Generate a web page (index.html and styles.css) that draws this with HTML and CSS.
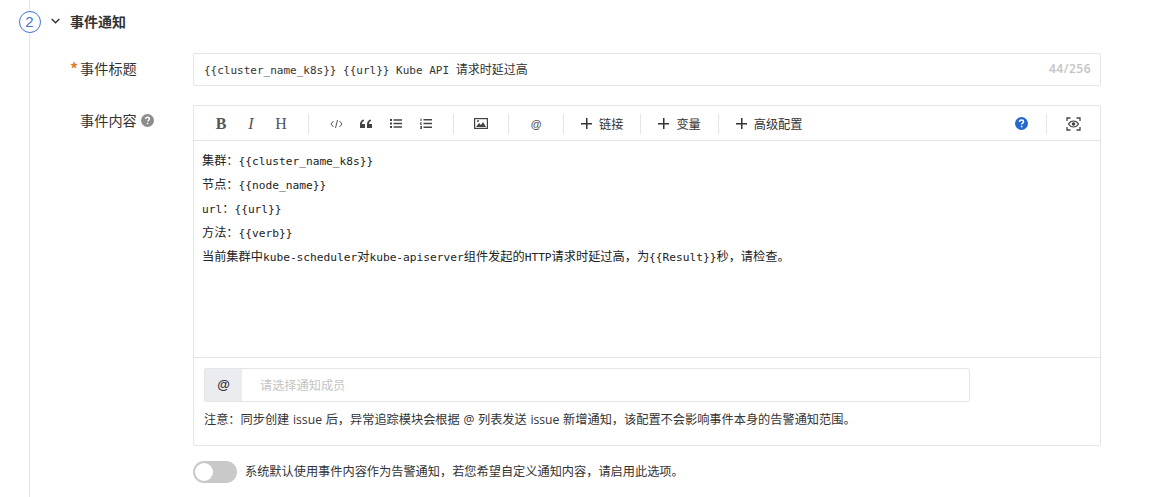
FILE: index.html
```html
<!DOCTYPE html>
<html lang="zh-CN">
<head>
    <meta charset="UTF-8">
    <meta name="viewport" content="width=device-width, initial-scale=1.0">
    <title>事件通知</title>
    <link rel="stylesheet" href="styles.css">
</head>
<body>
    <div class="step">
        <div class="rail">
            <div class="rail-stub"></div>
            <div class="step-num">2</div>
            <div class="rail-line"></div>
        </div>
        <div class="step-main">
            <div class="step-head">
                <svg class="chevron" width="9" height="6" viewBox="0 0 9 6"><path d="M.7 1l3.800 3.800L8.300 1" fill="none" stroke="#333" stroke-width="1.4"/></svg>
                <span class="step-title">事件通知</span>
            </div>

            <div class="form-row title-row">
                <div class="form-label"><span class="required">*</span>事件标题</div>
                <div class="title-input">
                    <span class="title-value"><span class="title-code">{{cluster_name_k8s}} {{url}} Kube API </span>请求时延过高</span>
                    <span class="counter">44/256</span>
                </div>
            </div>

            <div class="form-row">
                <div class="form-label label-top">事件内容<svg class="help" width="13" height="13" viewBox="0 0 13 13"><circle cx="6.5" cy="6.5" r="6.5" fill="#8c8c8c"/><path d="M4.6 5.1c0-1.100.8-1.800 1.900-1.800s1.900.7 1.900 1.600c0 1.300-1.700 1.400-1.700 2.700" fill="none" stroke="#fff" stroke-width="1.4"/><rect x="5.900" y="8.800" width="1.400" height="1.400" fill="#fff"/></svg></div>
                <div class="editor">
                    <div class="toolbar">
                        <span class="tool tool-b">B</span>
                        <span class="tool tool-i">I</span>
                        <span class="tool tool-h">H</span>
                        <span class="sep sep-a"></span>
                        <span class="tool tool-svg">
                            <svg width="13" height="10" viewBox="0 0 13 10"><path d="M3.500 2L1 5l2.500 3M9.500 2L12 5 9.500 8M7.500 1L5.500 9" fill="none" stroke="#555" stroke-width="1"/></svg>
                        </span>
                        <span class="tool tool-svg">
                            <svg width="12" height="9" viewBox="0 0 12 9"><path d="M0 5h2c0-1.500.6-2.600 2-3V.4C1.500.8 0 2.500 0 5zM0 5v4h5V5zM7 5h2c0-1.500.6-2.600 2-3V.4C8.500.8 7 2.500 7 5zM7 5v4h5V5z" fill="#444"/></svg>
                        </span>
                        <span class="tool tool-svg">
                            <svg width="12" height="9" viewBox="0 0 12 9"><path d="M0 0h2v2H0zM0 3.500h2v2H0zM0 7h2v2H0zM3.500.3H12v1.400H3.500zM3.500 3.800H12v1.400H3.500zM3.500 7.300H12v1.400H3.500z" fill="#444"/></svg>
                        </span>
                        <span class="tool tool-svg">
                            <svg width="12" height="11" viewBox="0 0 12 11"><path d="M.5.500h1v2.500h-1zM0 4.500h2v.8H.8v.7H2v.8H0zM0 8h2v3H0v-.7h1.200v-.4H.4v-.6h.8v-.6H0zM3.500 1H12v1.400H3.500zM3.500 4.800H12v1.400H3.500zM3.500 8.600H12V10H3.500z" fill="#444"/></svg>
                        </span>
                        <span class="sep sep-b"></span>
                        <span class="tool tool-svg">
                            <svg width="14" height="11" viewBox="0 0 14 11"><rect x=".6" y=".6" width="12.800" height="9.800" fill="none" stroke="#444" stroke-width="1.200"/><path d="M2 9l3-4 2 2 2-3 3 5z" fill="#444"/><circle cx="4" cy="3" r="1" fill="#444"/></svg>
                        </span>
                        <span class="sep sep-c"></span>
                        <span class="tool tool-at">@</span>
                        <span class="sep sep-d"></span>
                        <span class="tool-text"><span class="plus"></span>链接</span>
                        <span class="sep sep-e"></span>
                        <span class="tool-text"><span class="plus"></span>变量</span>
                        <span class="sep sep-e"></span>
                        <span class="tool-text"><span class="plus"></span>高级配置</span>
                        <span class="toolbar-right">
                            <svg width="13" height="13" viewBox="0 0 13 13"><circle cx="6.500" cy="6.500" r="6.500" fill="#2468cc"/><path d="M4.500 5c0-1.200.9-1.900 2-1.900s2 .7 2 1.700c0 1.300-1.800 1.400-1.800 2.700" fill="none" stroke="#fff" stroke-width="1.500"/><rect x="5.900" y="8.800" width="1.500" height="1.500" fill="#fff"/></svg>
                            <span class="sep sep-f"></span>
                            <svg width="15" height="14" viewBox="0 0 15 14"><path d="M1 4V1h3.500M10.500 1H14v3M14 10v3h-3.500M4.500 13H1v-3" fill="none" stroke="#444" stroke-width="1.300"/><path d="M2.500 7c1.300-2 3-3 5-3s3.700 1 5 3c-1.300 2-3 3-5 3s-3.700-1-5-3z" fill="none" stroke="#444" stroke-width="1.200"/><circle cx="7.500" cy="7" r="1.800" fill="#444"/></svg>
                        </span>
                    </div>
                    <div class="editor-body">
                        <p>集群：<span class="code">{{cluster_name_k8s}}</span></p>
                        <p>节点：<span class="code">{{node_name}}</span></p>
                        <p><span class="code">url</span>：<span class="code">{{url}}</span></p>
                        <p>方法：<span class="code">{{verb}}</span></p>
                        <p>当前集群中<span class="code">kube-scheduler</span>对<span class="code">kube-apiserver</span>组件发起的<span class="code">HTTP</span>请求时延过高，为<span class="code">{{Result}}</span>秒，请检查。</p>
                    </div>
                    <div class="editor-foot">
                        <div class="member-select">
                            <span class="member-at">@</span>
                            <span class="member-placeholder">请选择通知成员</span>
                        </div>
                        <div class="member-hint">注意：同步创建 issue 后，异常追踪模块会根据 @ 列表发送 issue 新增通知，该配置不会影响事件本身的告警通知范围。</div>
                    </div>
                </div>
            </div>

            <div class="switch-row">
                <span class="switch"><span class="switch-knob"></span></span>
                <span class="switch-text">系统默认使用事件内容作为告警通知，若您希望自定义通知内容，请启用此选项。</span>
            </div>
        </div>
    </div>
</body>
</html>
```

FILE: styles.css
```css
* {
    box-sizing: border-box;
}

html, body {
    height: 100%;
}

body {
    margin: 0;
    overflow: hidden;
    background-color: #fff;
    color: #333;
    font-family: "Noto Sans CJK SC", "Noto Sans", sans-serif;
    font-size: 12.2px;
}

.step {
    display: flex;
    height: 497px;
    padding-left: 18px;
}

.rail {
    display: flex;
    flex-direction: column;
    align-items: center;
    width: 23px;
}

.rail-stub {
    width: 1px;
    height: 11px;
    background-color: #e4e5ea;
}

.rail-line {
    flex: 1;
    width: 1px;
    margin-top: 1px;
    background-color: #e4e5ea;
}

.step-num {
    width: 22px;
    height: 22px;
    border: 1px solid #3f74d9;
    border-radius: 50%;
    color: #3f74d9;
    font-family: "Liberation Sans", sans-serif;
    font-size: 15px;
    line-height: 20px;
    text-align: center;
}

.step-main {
    flex: 1;
    padding-top: 10px;
}

.step-head {
    display: flex;
    align-items: center;
    height: 22px;
    padding-left: 10px;
}

.chevron {
    margin-right: 10px;
}

.step-title {
    font-size: 14px;
    font-weight: 700;
    color: #333;
}

.form-row {
    display: flex;
    margin-bottom: 15px;
}

.title-row {
    margin-top: 21px;
    margin-bottom: 19px;
}

.form-label {
    position: relative;
    width: 152px;
    padding-left: 39px;
    font-size: 14.2px;
    line-height: 30px;
    white-space: nowrap;
    color: #333;
}

.label-top {
    line-height: 31px;
}

.required {
    position: absolute;
    left: 29px;
    top: 0;
    color: #d9822b;
    font-size: 16px;
    font-weight: 700;
}

.help {
    margin-left: 4px;
    vertical-align: -1px;
}

.code {
    font-family: "DejaVu Sans Mono", "Liberation Mono", monospace;
    font-size: 11.2px;
}

.title-code {
    font-family: "DejaVu Sans Mono", "Liberation Mono", monospace;
    font-size: 11px;
}

.title-input {
    display: flex;
    align-items: center;
    justify-content: space-between;
    width: 908px;
    height: 33px;
    padding: 0 9px 2px 10px;
    border: 1px solid #e4e5ea;
    border-radius: 2px;
}

.title-value {
    color: #333;
    font-size: 12px;
    white-space: nowrap;
}

.counter {
    color: #c4c4c4;
    font-family: "Open Sans", sans-serif;
    font-size: 12px;
    font-weight: 600;
    letter-spacing: 0.5px;
}

.editor {
    width: 908px;
    height: 341px;
    border: 1px solid #e4e5ea;
    border-radius: 2px;
}

.toolbar {
    display: flex;
    align-items: center;
    height: 35px;
    border-bottom: 1px solid #e4e5ea;
    padding: 1px 0 0 20px;
}

.tool {
    display: flex;
    align-items: center;
    justify-content: center;
    color: #555;
}

.tool-b, .tool-i, .tool-h {
    width: 14px;
    margin-right: 16px;
    font-family: "Liberation Serif", serif;
    font-size: 16px;
}

.tool-b {
    font-weight: 700;
}

.tool-i {
    font-style: italic;
}

.tool-h {
    margin-right: 0;
}

.tool-svg {
    width: 14px;
    margin-right: 16px;
}

.tool-at {
    width: 14px;
    font-family: "Liberation Sans", sans-serif;
    font-weight: 700;
    font-size: 11px;
}

.sep {
    width: 1px;
    height: 20px;
    background-color: #e4e5ea;
}

.sep-a {
    margin: 0 20px;
}

.sep-b {
    margin: 0 20px 0 4px;
}

.sep-c {
    margin: 0 20px 0 4px;
}

.sep-d {
    margin: 0 17px 0 20px;
}

.sep-e {
    margin: 0 17px;
}

.sep-f {
    margin: 0 19px 0 18px;
}

.tool-text {
    display: flex;
    align-items: center;
    color: #333;
    white-space: nowrap;
}

.plus {
    width: 11px;
    height: 11px;
    margin-right: 7px;
    background:
        linear-gradient(#333, #333) center / 11px 1.5px no-repeat,
        linear-gradient(#333, #333) center / 1.5px 11px no-repeat;
}

.toolbar-right {
    display: flex;
    align-items: center;
    margin-left: auto;
    padding-right: 19px;
}

.editor-body {
    height: 217px;
    padding: 7px 8px 0;
    border-bottom: 1px solid #e4e5ea;
    color: #222;
}

.editor-body p {
    height: 24px;
    margin: 0;
    line-height: 24px;
}

.editor-foot {
    padding: 10px 10px 0;
}

.member-select {
    display: flex;
    align-items: center;
    width: 766px;
    height: 34px;
    border: 1px solid #e4e5ea;
    border-radius: 2px;
}

.member-at {
    width: 37px;
    height: 100%;
    background-color: #ebecf0;
    font-family: "Liberation Sans", sans-serif;
    font-weight: 700;
    font-size: 13px;
    line-height: 32px;
    text-align: center;
    color: #333;
}

.member-placeholder {
    margin-left: 18px;
    padding-bottom: 1px;
    color: #c4c4c4;
}

.member-hint {
    margin-top: 9px;
    font-family: "Open Sans", "Noto Sans CJK SC", sans-serif;
    line-height: 17px;
    color: #333;
    white-space: nowrap;
    word-spacing: 0.5px;
}

.switch-row {
    display: flex;
    align-items: center;
    margin-left: 152px;
}

.switch {
    display: block;
    width: 44px;
    height: 22px;
    padding: 2px;
    border-radius: 11px;
    background-color: #c9c9c9;
}

.switch-knob {
    display: block;
    width: 18px;
    height: 18px;
    border-radius: 50%;
    background-color: #fff;
}

.switch-text {
    margin-left: 8px;
    padding-bottom: 2px;
    color: #333;
}
```
